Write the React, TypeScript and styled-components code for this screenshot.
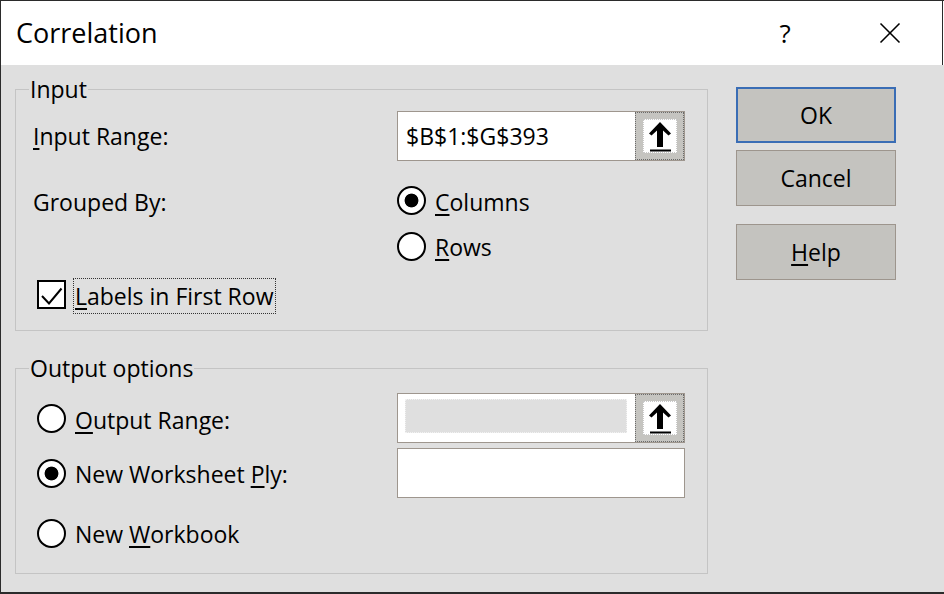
import React from "react";
import styled, { createGlobalStyle } from "styled-components";

const Global = createGlobalStyle`
  html, body { margin: 0; padding: 0; background: #dfdfdf; }
  body { font-family: "Open Sans", "Noto Sans", sans-serif; }
`;

const Window = styled.div`
  width: 944px;
  height: 594px;
  box-sizing: border-box;
  border-top: 1px solid #2b2b2b;
  border-left: 1px solid #2b2b2b;
  border-bottom: 2px solid #2b2b2b;
  background: #dfdfdf;
  display: flex;
  flex-direction: column;
  overflow: hidden;
  font-family: "Open Sans", "Noto Sans", sans-serif;
  font-size: 23px;
  color: #000;
`;

const TitleBar = styled.div`
  height: 64px;
  flex: none;
  background: #fff;
  display: flex;
  align-items: center;
  padding: 0 29px 0 15px;
  border-right: 1px solid #2b2b2b;
  margin-right: 1px;
  box-shadow: 1px 0 0 #fff;
`;

const Title = styled.div`
  flex: 1;
  font-size: 27px;
  line-height: 34px;
  padding-bottom: 1px;
`;

const TitleButton = styled.div<{ $ml: number }>`
  width: 46px;
  height: 40px;
  margin-left: ${(p) => p.$ml}px;
  display: flex;
  align-items: center;
  justify-content: center;
  font-size: 26px;
  line-height: 34px;
`;

const Body = styled.div`
  flex: 1;
  display: flex;
  padding: 9px 0 0 14px;
`;

const LeftColumn = styled.div`
  width: 693px;
  display: flex;
  flex-direction: column;
  gap: 22px;
`;

const Group = styled.fieldset<{ $pt: number; $pb: number }>`
  margin: 0;
  min-width: 0;
  border: 1px solid #c4c4c4;
  padding: ${(p) => p.$pt}px 22px ${(p) => p.$pb}px 17px;
`;

const Legend = styled.legend`
  margin-left: -4px;
  padding: 0 1px;
  line-height: 30px;
  font-size: 23px;
`;

const Row = styled.div<{ $h: number; $mt?: number }>`
  display: flex;
  align-items: center;
  height: ${(p) => p.$h}px;
  margin-top: ${(p) => p.$mt ?? 0}px;
`;

const TopRow = styled.div<{ $mt: number }>`
  display: flex;
  align-items: flex-start;
  margin-top: ${(p) => p.$mt}px;
`;

const Label = styled.div<{ $w: number }>`
  width: ${(p) => p.$w}px;
  flex: none;
  line-height: 30px;
  white-space: nowrap;
`;

const Key = styled.u`
  text-decoration: underline;
  text-decoration-thickness: 1.5px;
  text-underline-offset: 3px;
`;

const Field = styled.div`
  width: 288px;
  height: 50px;
  box-sizing: border-box;
  border: 1px solid #9e968e;
  background: #fff;
  display: flex;
`;

const FieldText = styled.div`
  flex: 1;
  padding-left: 8px;
  display: flex;
  align-items: center;
  line-height: 30px;
`;

const DisabledInner = styled.div`
  flex: 1;
  margin: 5px 8px 9px 7px;
  background: #dfdfdf;
  border: 1px dotted #f2f2f2;
`;

const PickButton = styled.div`
  width: 49px;
  flex: none;
  background: #c5c4c0;
  display: flex;
  align-items: center;
  justify-content: center;
  outline: 1px dotted #6a6a6a;
  outline-offset: -1px;
  border-bottom: 1px dotted #3a6db5;
  box-sizing: border-box;
`;

const PickFace = styled.div`
  width: 34px;
  height: 34px;
  box-sizing: border-box;
  background: #fff;
  border: 1px dotted #c8c8c8;
  display: flex;
`;

const RadioStack = styled.div`
  display: flex;
  flex-direction: column;
  gap: 15px;
`;

const RadioOption = styled.div<{ $w?: number }>`
  display: flex;
  align-items: center;
  gap: 9px;
  height: 30px;
  white-space: nowrap;
  ${(p) => (p.$w ? `width: ${p.$w}px; flex: none; margin-left: 4px;` : "")}
`;

const RadioText = styled.span<{ $drop?: number }>`
  padding-top: ${(p) => p.$drop ?? 0}px;
`;

const RadioCircle = styled.span<{ $checked?: boolean; $lift?: number }>`
  width: 29px;
  height: 29px;
  flex: none;
  box-sizing: border-box;
  border: 2px solid #000;
  border-radius: 50%;
  margin-bottom: ${(p) => p.$lift ?? 0}px;
  background: ${(p) =>
    p.$checked
      ? "radial-gradient(circle, #000 0 6.5px, #fff 7.3px)"
      : "#fff"};
`;

const CheckRow = styled.div`
  display: flex;
  align-items: center;
  margin: 16px 0 0 4px;
`;

const CheckBox = styled.span`
  width: 29px;
  height: 29px;
  box-sizing: border-box;
  border: 2px solid #000;
  background: #fff;
  display: flex;
  margin-bottom: 4px;
`;

const FocusLabel = styled.span`
  margin-left: 7px;
  border: 1px dotted #333;
  padding: 2px 2px 2px 1px;
  line-height: 30px;
  white-space: nowrap;
`;

const ButtonColumn = styled.div`
  width: 160px;
  margin-left: 28px;
  padding-top: 13px;
  display: flex;
  flex-direction: column;
`;

const DialogButton = styled.button<{ $default?: boolean; $mt: number }>`
  height: 56px;
  margin-top: ${(p) => p.$mt}px;
  box-sizing: border-box;
  border: ${(p) => (p.$default ? "2px solid #3a6db5" : "1px solid #9d958d")};
  background: #c4c3bf;
  font-family: inherit;
  font-size: 23px;
  color: #000;
  padding: 0;
  line-height: 30px;
`;

const UpArrow = () => (
  <svg width="32" height="32" viewBox="0 0 32 32">
    <polygon
      points="16,2 27,13.5 24.5,15.5 19,10.5 19,27 13,27 13,10.5 7.5,15.5 5,13.5"
      fill="#000"
    />
    <rect x="6" y="29.5" width="21" height="2" fill="#000" />
  </svg>
);

const CheckMark = () => (
  <svg width="25" height="25" viewBox="0 0 25 25">
    <polyline
      points="3,14 10,21.5 22.5,6.5"
      fill="none"
      stroke="#000"
      strokeWidth="2"
    />
  </svg>
);

const CloseIcon = () => (
  <svg width="22" height="22" viewBox="0 0 22 22">
    <line x1="1.5" y1="1.5" x2="20.5" y2="20.5" stroke="#000" strokeWidth="1.6" />
    <line x1="20.5" y1="1.5" x2="1.5" y2="20.5" stroke="#000" strokeWidth="1.6" />
  </svg>
);

export default function App() {
  return (
    <>
      <Global />
      <Window>
        <TitleBar>
          <Title>Correlation</Title>
          <TitleButton $ml={0}>?</TitleButton>
          <TitleButton $ml={59}>
            <CloseIcon />
          </TitleButton>
        </TitleBar>
        <Body>
          <LeftColumn>
            <Group $pt={7} $pb={16}>
              <Legend>Input</Legend>
              <Row $h={50}>
                <Label $w={364}>
                  <Key>I</Key>nput Range:
                </Label>
                <Field>
                  <FieldText>$B$1:$G$393</FieldText>
                  <PickButton>
                    <PickFace>
                      <UpArrow />
                    </PickFace>
                  </PickButton>
                </Field>
              </Row>
              <TopRow $mt={26}>
                <Label $w={364}>Grouped By:</Label>
                <RadioStack>
                  <RadioOption>
                    <RadioCircle $checked $lift={4} />
                    <RadioText>
                      <Key>C</Key>olumns
                    </RadioText>
                  </RadioOption>
                  <RadioOption>
                    <RadioCircle $lift={2} />
                    <RadioText>
                      <Key>R</Key>ows
                    </RadioText>
                  </RadioOption>
                </RadioStack>
              </TopRow>
              <CheckRow>
                <CheckBox>
                  <CheckMark />
                </CheckBox>
                <FocusLabel>
                  <Key>L</Key>abels in First Row
                </FocusLabel>
              </CheckRow>
            </Group>
            <Group $pt={10} $pb={22}>
              <Legend>Output options</Legend>
              <Row $h={50}>
                <RadioOption $w={360}>
                  <RadioCircle />
                  <RadioText $drop={4}>
                    <Key>O</Key>utput Range:
                  </RadioText>
                </RadioOption>
                <Field>
                  <DisabledInner />
                  <PickButton>
                    <PickFace>
                      <UpArrow />
                    </PickFace>
                  </PickButton>
                </Field>
              </Row>
              <Row $h={50} $mt={5}>
                <RadioOption $w={360}>
                  <RadioCircle $checked />
                  <RadioText $drop={2}>
                    New Worksheet <Key>P</Key>ly:
                  </RadioText>
                </RadioOption>
                <Field />
              </Row>
              <Row $h={36} $mt={17}>
                <RadioOption $w={360}>
                  <RadioCircle />
                  <RadioText $drop={1}>
                    New <Key>W</Key>orkbook
                  </RadioText>
                </RadioOption>
              </Row>
            </Group>
          </LeftColumn>
          <ButtonColumn>
            <DialogButton $default $mt={0}>
              OK
            </DialogButton>
            <DialogButton $mt={7}>Cancel</DialogButton>
            <DialogButton $mt={18}>
              <Key>H</Key>elp
            </DialogButton>
          </ButtonColumn>
        </Body>
      </Window>
    </>
  );
}
